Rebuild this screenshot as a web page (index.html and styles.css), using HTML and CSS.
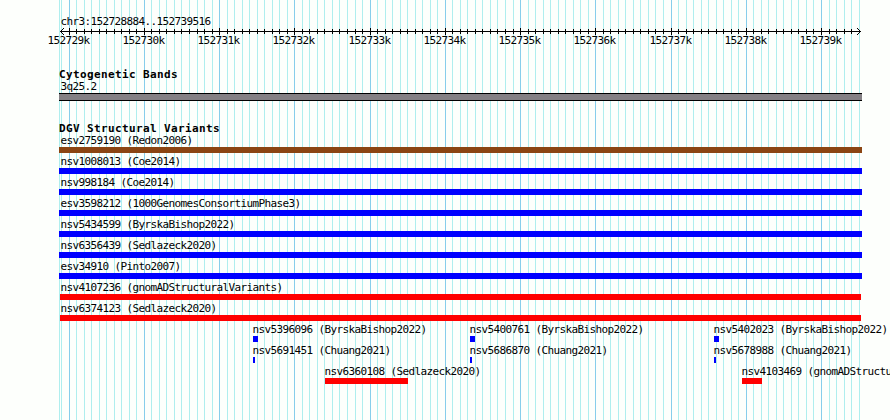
FILE: index.html
```html
<!DOCTYPE html>
<html>
<head>
  <meta charset="utf-8">
  <title>chr3:152728884..152739516</title>
  <link rel="stylesheet" href="styles.css">
</head>
<body>
  <div class="browser">
    <svg class="grid" id="grid" width="890" height="420"></svg>

    <div class="region">chr3:152728884..152739516</div>
    <svg class="ruler" id="ruler" width="890" height="8"></svg>
    <div class="scale" id="scale"></div>

    <div class="track cytobands">
      <h2>Cytogenetic Bands</h2>
      <div class="label">3q25.2</div>
      <div class="band"></div>
    </div>

    <div class="track variants">
      <h2>DGV Structural Variants</h2>
      <div id="variants"></div>
    </div>
  </div>

  <script src="tracks.js"></script>
</body>
</html>
```
FILE: styles.css
```css
body {
  margin: 0;
  background-color: #fdfffc;
  color: #000;
  font-family: "DejaVu Sans Mono", monospace;
  font-size: 11px;
  line-height: 14px;
  letter-spacing: -0.62px;
  overflow: hidden;
}

.browser {
  position: relative;
  width: 890px;
  height: 420px;
  box-sizing: border-box;
  padding-top: 15px;
  overflow: hidden;
  white-space: nowrap;
}

/* guide lines behind all the tracks */
.grid {
  position: absolute;
  top: 0;
  left: 0;
  z-index: -1;
}

.grid .minor {
  fill: #afeeee;
}

.grid .major {
  fill: #87ceeb;
}

.region {
  padding-left: 60.5px;
  height: 13px;
}

.ruler {
  display: block;
  height: 7px;
}

.scale {
  display: grid;
  height: 12px;
  line-height: 12px;
}

.scale span {
  grid-area: 1 / 1;
}

.track h2 {
  height: 12px;
  margin: 0 0 0 59px;
  font-size: 11px;
  font-weight: bold;
  letter-spacing: 0.38px;
}

.track .label {
  height: 12px;
}

.cytobands {
  padding-top: 21px;
}

.cytobands .label {
  padding-left: 60.5px;
}

.band {
  box-sizing: border-box;
  width: 803px;
  height: 8px;
  margin: 1px 0 0 59px;
  background-color: #848084;
  border-top: 1px solid #000;
  border-bottom: 1px solid #000;
}

.variants {
  padding-top: 21px;
}

.row {
  display: grid;
  justify-items: start;
  height: 21px;
}

.feature {
  grid-area: 1 / 1;
}

.feature .bar {
  height: 6px;
  margin-top: 1px;
}

.feature .label {
  margin-left: -0.5px;
}

.feature.full .label {
  margin-left: 1.5px;
}

.feature.wide .label {
  margin-left: 0.5px;
}

.gain {
  background-color: #0000ff;
}

.loss {
  background-color: #ff0000;
}

.complex {
  background-color: #8b4513;
}
```
FILE: tracks.js
```javascript
var grid = document.getElementById("grid");
var ruler = document.getElementById("ruler");
var scale = document.getElementById("scale");
var variants = document.getElementById("variants");

function addRect(svg, x, y, w, h, cls) {
  var rect = document.createElementNS("http://www.w3.org/2000/svg", "rect");
  rect.setAttribute("x", x);
  rect.setAttribute("y", y);
  rect.setAttribute("width", w);
  rect.setAttribute("height", h);
  if (cls) rect.setAttribute("class", cls);
  svg.appendChild(rect);
}

// grid line and tick every 100 bases, label every 1000
addRect(grid, 59, 0, 1, 420, "minor");
addRect(ruler, 60, 3, 801, 1);
for (var i = -1; i <= 105; i++) {
  var x = Math.floor(69.1 + i * 7.524);
  var major = i % 10 === 0;
  addRect(grid, x, 0, 1, 420, major ? "major" : "minor");
  if (major) {
    addRect(ruler, x, 0, 1, 7);
    var span = document.createElement("span");
    span.textContent = 152729 + i / 10 + "k";
    span.style.marginLeft = x - 21.5 + "px";
    scale.appendChild(span);
  } else if (i > 0 && i < 105) {
    addRect(ruler, x, 1, 1, 5);
  }
}

// arrow heads
for (var a = 1; a <= 3; a++) {
  addRect(ruler, 60 + a, 3 - a, 1, 1);
  addRect(ruler, 60 + a, 3 + a, 1, 1);
  addRect(ruler, 860 - a, 3 - a, 1, 1);
  addRect(ruler, 860 - a, 3 + a, 1, 1);
}

// [name, type, left, width]
var rows = [
  [["esv2759190 (Redon2006)", "complex", 59, 803]],
  [["nsv1008013 (Coe2014)", "gain", 59, 803]],
  [["nsv998184 (Coe2014)", "gain", 59, 803]],
  [["esv3598212 (1000GenomesConsortiumPhase3)", "gain", 59, 803]],
  [["nsv5434599 (ByrskaBishop2022)", "gain", 59, 803]],
  [["nsv6356439 (Sedlazeck2020)", "gain", 59, 803]],
  [["esv34910 (Pinto2007)", "gain", 59, 803]],
  [["nsv4107236 (gnomADStructuralVariants)", "loss", 60, 801]],
  [["nsv6374123 (Sedlazeck2020)", "loss", 60, 801]],
  [
    ["nsv5396096 (ByrskaBishop2022)", "gain", 253, 5],
    ["nsv5400761 (ByrskaBishop2022)", "gain", 470, 5],
    ["nsv5402023 (ByrskaBishop2022)", "gain", 714, 5]
  ],
  [
    ["nsv5691451 (Chuang2021)", "gain", 253, 2],
    ["nsv5686870 (Chuang2021)", "gain", 470, 2],
    ["nsv5678988 (Chuang2021)", "gain", 714, 2]
  ],
  [
    ["nsv6360108 (Sedlazeck2020)", "loss", 325, 83],
    ["nsv4103469 (gnomADStructuralVariants)", "loss", 742, 20]
  ]
];

rows.forEach(function (features) {
  var row = document.createElement("div");
  row.className = "row";
  features.forEach(function (f) {
    var feature = document.createElement("div");
    feature.className = "feature" + (f[3] === 803 ? " full" : f[3] === 801 ? " wide" : "");
    feature.style.marginLeft = f[2] + "px";

    var label = document.createElement("div");
    label.className = "label";
    label.textContent = f[0];
    feature.appendChild(label);

    var bar = document.createElement("div");
    bar.className = "bar " + f[1];
    bar.style.width = f[3] + "px";
    feature.appendChild(bar);

    row.appendChild(feature);
  });
  variants.appendChild(row);
});
```
